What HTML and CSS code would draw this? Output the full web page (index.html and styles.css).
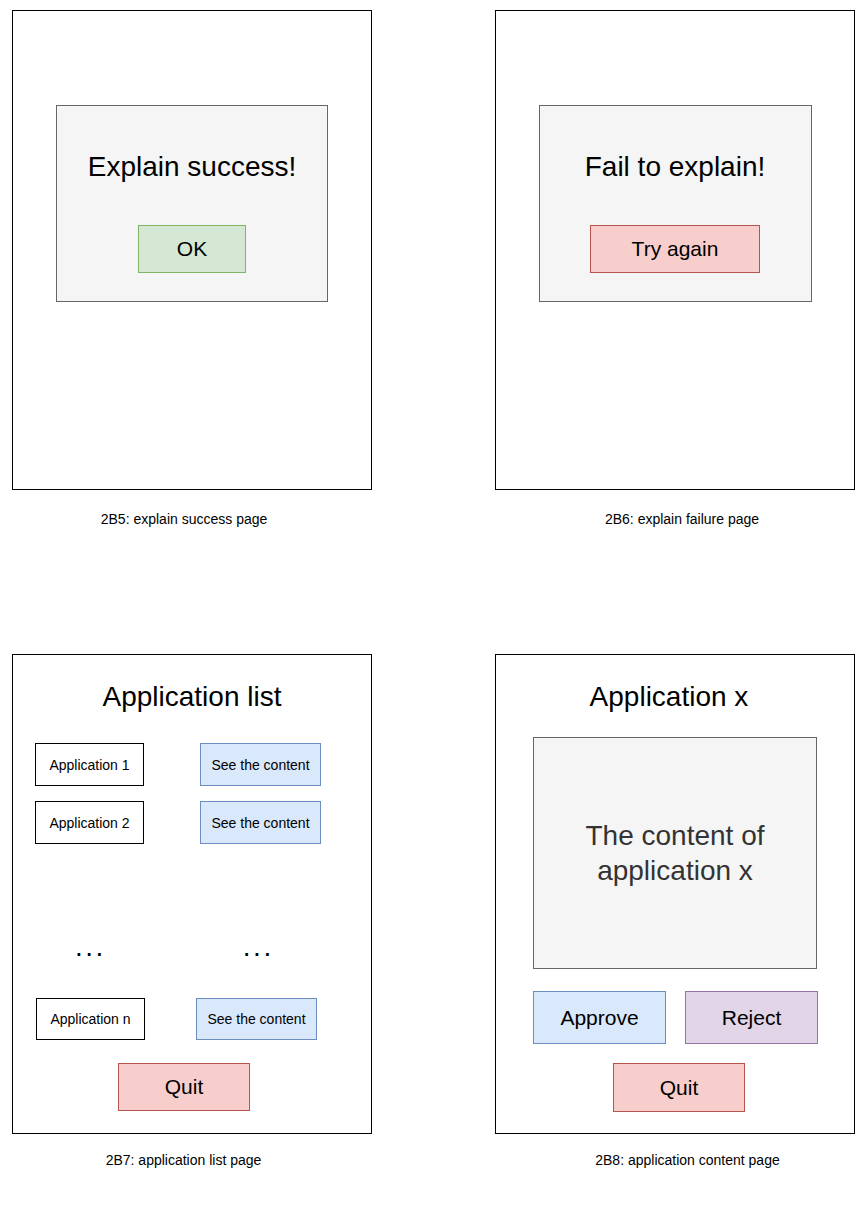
FILE: index.html
```html
<!DOCTYPE html>
<html lang="en">
<head>
<meta charset="utf-8">
<title>Explain and application pages</title>
<link rel="stylesheet" href="styles.css">
</head>
<body>
<main class="board">
  <section class="cell">
    <div class="frame frame-dialog">
      <div class="dialog">
        <div class="dialog-title">Explain success!</div>
        <div class="btn btn-green btn-ok">OK</div>
      </div>
    </div>
    <p class="caption cap-a">2B5: explain success page</p>
  </section>

  <section class="cell">
    <div class="frame frame-dialog">
      <div class="dialog dialog-wide">
        <div class="dialog-title">Fail to explain!</div>
        <div class="btn btn-red btn-try">Try again</div>
      </div>
    </div>
    <p class="caption cap-b">2B6: explain failure page</p>
  </section>

  <section class="cell">
    <div class="frame frame-list">
      <h1 class="page-title">Application list</h1>
      <div class="app-row app-row-first">
        <div class="app-name">Application 1</div>
        <div class="app-see">See the content</div>
      </div>
      <div class="app-row app-row-second">
        <div class="app-name">Application 2</div>
        <div class="app-see">See the content</div>
      </div>
      <div class="dots"><span>...</span><span>...</span></div>
      <div class="app-row app-row-last">
        <div class="app-name">Application n</div>
        <div class="app-see">See the content</div>
      </div>
      <div class="btn btn-red btn-quit btn-quit-list">Quit</div>
    </div>
    <p class="caption caption-low cap-c">2B7: application list page</p>
  </section>

  <section class="cell">
    <div class="frame frame-content">
      <h1 class="page-title page-title-x">Application x</h1>
      <div class="content-box">The content of<br>application x</div>
      <div class="decision-row">
        <div class="btn btn-blue btn-decide">Approve</div>
        <div class="btn btn-purple btn-decide">Reject</div>
      </div>
      <div class="btn btn-red btn-quit btn-quit-content">Quit</div>
    </div>
    <p class="caption caption-low cap-d">2B8: application content page</p>
  </section>
</main>
</body>
</html>
```

FILE: styles.css
```css
* {
  box-sizing: border-box;
}

html, body {
  margin: 0;
  padding: 0;
  background: #ffffff;
}

body {
  font-family: "Liberation Sans", Arial, sans-serif;
  color: #000000;
}

.board {
  display: grid;
  grid-template-columns: 360px 360px;
  column-gap: 123px;
  row-gap: 127px;
  padding: 10px 0 0 12px;
}

.cell {
  display: flex;
  flex-direction: column;
}

.frame {
  width: 360px;
  height: 480px;
  border: 1px solid #000000;
  background: #ffffff;
  display: flex;
  flex-direction: column;
}

.caption {
  margin: 21px 0 0 0;
  font-size: 14px;
  line-height: 16px;
  text-align: center;
}

.caption-low {
  margin-top: 18px;
}

.cap-a { padding-right: 16px; }
.cap-b { padding-left: 14px; }
.cap-c { padding-right: 17px; }
.cap-d { padding-left: 25px; }

/* dialog pages */
.frame-dialog {
  padding-top: 94px;
  align-items: center;
}

.dialog {
  width: 272px;
  height: 197px;
  background: #f5f5f5;
  border: 1px solid #666666;
  display: flex;
  flex-direction: column;
  align-items: center;
  padding-top: 45px;
}

.dialog-wide {
  width: 273px;
}

.dialog-title {
  font-size: 28px;
  line-height: 32px;
  white-space: nowrap;
}

.btn {
  display: flex;
  align-items: center;
  justify-content: center;
  font-size: 21px;
  border: 1px solid;
  white-space: nowrap;
}

.btn-green { background: #d5e8d4; border-color: #82b366; }
.btn-red { background: #f8cecc; border-color: #b85450; }
.btn-blue { background: #dae8fc; border-color: #6c8ebf; }
.btn-purple { background: #e1d5e7; border-color: #9673a6; }

.btn-ok {
  width: 108px;
  height: 48px;
  margin-top: 42px;
}

.btn-try {
  width: 170px;
  height: 48px;
  margin-top: 42px;
}

/* list / content pages */
.frame-list,
.frame-content {
  padding-top: 26px;
}

.page-title {
  margin: 0;
  font-size: 28px;
  font-weight: normal;
  line-height: 32px;
  text-align: center;
}

.page-title-x {
  padding-right: 12px;
}

.app-row {
  display: flex;
  height: 43px;
}

.app-row-first {
  margin-top: 30px;
  padding-left: 22px;
  gap: 56px;
}

.app-row-second {
  margin-top: 15px;
  padding-left: 22px;
  gap: 56px;
}

.app-row-last {
  margin-top: 35px;
  height: 42px;
  padding-left: 23px;
  gap: 51px;
}

.app-name,
.app-see {
  display: flex;
  align-items: center;
  justify-content: center;
  font-size: 14px;
  border: 1px solid;
  white-space: nowrap;
}

.app-name {
  width: 109px;
  background: #ffffff;
  border-color: #000000;
}

.app-see {
  width: 121px;
  background: #dae8fc;
  border-color: #6c8ebf;
}

.dots {
  display: flex;
  margin-top: 87px;
  padding-left: 62px;
  font-size: 28px;
  line-height: 32px;
  letter-spacing: 2.5px;
}

.dots span + span {
  margin-left: 137px;
}

.btn-quit {
  width: 132px;
  height: 48px;
}

.btn-quit-list {
  margin-top: 23px;
  margin-left: 105px;
}

.content-box {
  width: 284px;
  height: 232px;
  margin-top: 24px;
  margin-left: 37px;
  background: #f5f5f5;
  border: 1px solid #666666;
  color: #333333;
  font-size: 28px;
  line-height: 35px;
  text-align: center;
  display: flex;
  align-items: center;
  justify-content: center;
}

.decision-row {
  display: flex;
  gap: 19px;
  margin-top: 22px;
  padding-left: 37px;
}

.btn-decide {
  width: 133px;
  height: 53px;
}

.btn-quit-content {
  height: 49px;
  margin-top: 19px;
  margin-left: 117px;
}
```
